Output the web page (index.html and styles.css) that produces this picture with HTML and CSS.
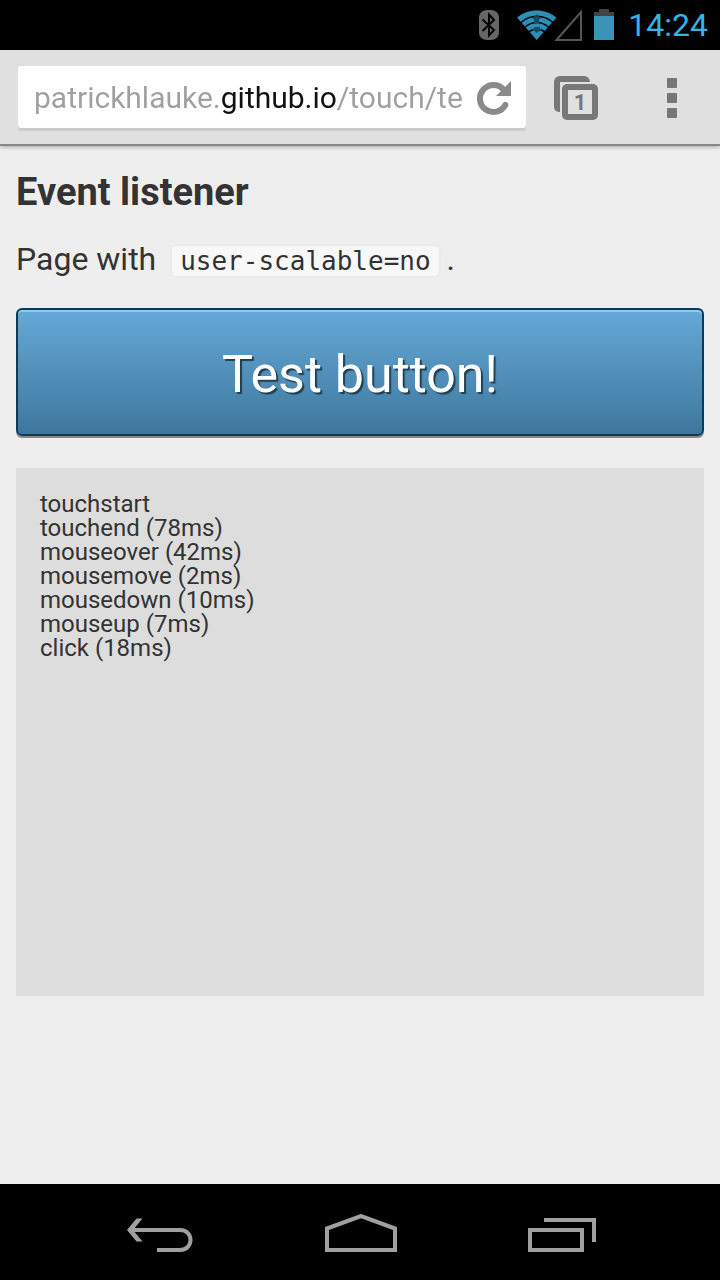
FILE: index.html
```html
<!DOCTYPE html>
<html lang="en">
<head>
<meta charset="utf-8">
<meta name="viewport" content="width=device-width, initial-scale=1">
<title>Event listener</title>
<link rel="stylesheet" href="styles.css">
</head>
<body class="screen">
<div class="status-bar">
  <svg class="status-bluetooth" width="20" height="30" viewBox="0 0 20 30" aria-hidden="true">
    <rect width="20" height="30" rx="8" ry="7" fill="#666"/>
    <path d="M3.500 9.500 15 20l-5 5.500v-21L15 10 3.500 21" fill="none" stroke="#000" stroke-width="2"/>
  </svg>
  <svg class="status-wifi" width="40" height="30" viewBox="0 0 40 30" aria-hidden="true">
    <path d="M0 7.500C11-2 28-2 39.500 7.500L19.700 30Z" fill="#2b8fb8"/>
    <path d="M4 12.500C13 4 27 4 36 12.500M8 17C15 11 24.500 11 31.500 17M12 21.700C16.500 18 23 18 27.500 21.700" fill="none" stroke="#000" stroke-width="1.500"/>
    <path d="m20 4 4 5h-2v4h-5V9h-2ZM17 17h6v2h2l-5 4-5-4h2Z" fill="#154c61"/>
  </svg>
  <svg class="status-signal" width="28" height="32" viewBox="0 0 28 32" aria-hidden="true">
    <path d="M2.500 31 27 3v28Z" fill="none" stroke="#555" stroke-width="2"/>
  </svg>
  <svg class="status-battery" width="20" height="32" viewBox="0 0 20 32" aria-hidden="true">
    <path d="M0 3h5V0h10v3h5v4H0Z" fill="#444"/>
    <path d="M0 7h20v24H0Z" fill="#3994b8"/>
  </svg>
  <time class="clock" datetime="14:24">14:24</time>
</div>

<header class="toolbar">
  <form class="omnibox">
    <input class="omnibox-url" type="text" aria-label="Address" value="patrickhlauke.github.io/touch/te" spellcheck="false">
    <button class="icon-button toolbar-button" type="button" aria-label="Reload">
      <svg width="36" height="36" viewBox="0 0 36 36" aria-hidden="true">
        <path d="M27.500 9.500A13.500 13.500 0 1 0 29.300 25" fill="none" stroke="#8a8a8a" stroke-width="6" stroke-linecap="round"/>
        <path d="M35 1v15H20Z" fill="#8a8a8a"/>
      </svg>
    </button>
  </form>
  <button class="icon-button toolbar-button tabs-button" type="button" aria-label="Open tabs">
    <svg width="44" height="44" viewBox="0 0 44 44" aria-hidden="true">
      <path d="M6 36H5a5 5 0 0 1-5-5V6a6 6 0 0 1 6-6h24a6 6 0 0 1 6 6H6Z" fill="#777"/>
      <rect x="11" y="11" width="30" height="30" rx="2" fill="#e0e0e0" stroke="#777" stroke-width="6"/>
    </svg>
    <span class="tabs-count">1</span>
  </button>
  <button class="icon-button toolbar-button menu-button" type="button" aria-label="Menu">
    <svg width="10" height="40" viewBox="0 0 10 40" fill="#777" aria-hidden="true">
      <rect width="10" height="10" rx="1"/><rect y="15" width="10" height="10" rx="1"/><rect y="30" width="10" height="10" rx="1"/>
    </svg>
  </button>
</header>

<main class="page">
  <h1 class="page-title">Event listener</h1>
  <p class="page-intro">Page with <code class="code">user-scalable=no</code> .</p>
  <button class="test-button" type="button">Test button!</button>
  <div class="event-log" role="log">
    <div>touchstart</div>
    <div>touchend (78ms)</div>
    <div>mouseover (42ms)</div>
    <div>mousemove (2ms)</div>
    <div>mousedown (10ms)</div>
    <div>mouseup (7ms)</div>
    <div>click (18ms)</div>
  </div>
</main>

<nav class="nav-bar" aria-label="System">
  <button class="icon-button" type="button" aria-label="Back">
    <svg width="67" height="35" viewBox="0 0 67 35" fill="none" stroke="#a0a0a0" stroke-width="4" aria-hidden="true">
      <path d="M4 13h50c14 0 14 20 0 20H31"/>
      <path d="M1 13 10.500 1.500h6L7 13l9.500 11.500h-6Z" fill="#a0a0a0" stroke="none"/>
    </svg>
  </button>
  <button class="icon-button" type="button" aria-label="Home">
    <svg width="72" height="38" viewBox="0 0 72 38" fill="none" stroke="#a0a0a0" stroke-width="4" aria-hidden="true">
      <path d="M2 36V14.500L36 2l34 12.500V36Z"/>
    </svg>
  </button>
  <button class="icon-button" type="button" aria-label="Recent apps">
    <svg width="68" height="34" viewBox="0 0 68 34" fill="none" stroke="#a0a0a0" stroke-width="4" aria-hidden="true">
      <path d="M16 2h50v22M2 12h52v20H2Z"/>
    </svg>
  </button>
</nav>
</body>
</html>
```

FILE: styles.css
```css
* {
  box-sizing: border-box;
}

.screen {
  display: flex;
  flex-direction: column;
  min-height: 100vh;
  margin: 0;
  background: #eee;
  color: #333;
  font-family: Roboto, sans-serif;
}

.icon-button {
  display: grid;
  place-items: center;
  flex: none;
  padding: 0;
  border: 0;
  background: none;
}

/* System status bar */
.status-bar {
  display: flex;
  justify-content: flex-end;
  align-items: center;
  height: 50px;
  padding-right: 12px;
  background: #000;
}

.status-bluetooth {
  margin-right: 18px;
}

.status-signal {
  margin: 0 12px 0 -3px;
}

.status-battery {
  margin-right: 14px;
}

.clock {
  color: #33b5e5;
  font-size: 32px;
  line-height: 50px;
}

/* Browser toolbar */
.toolbar {
  display: flex;
  align-items: center;
  height: 96px;
  padding: 0 43px 0 18px;
  border-bottom: 2px solid #888;
  background: #e0e0e0;
  box-shadow: 0 1px 4px rgba(0, 0, 0, 0.3);
}

.toolbar-button {
  padding-top: 2px;
}

.omnibox {
  display: flex;
  align-items: center;
  flex: 1;
  height: 62px;
  min-width: 0;
  padding: 0 14px 0 16px;
  border-radius: 3px;
  background: #fff;
  box-shadow: 0 3px 1px #ccc;
}

.omnibox-url {
  flex: 1;
  min-width: 0;
  height: 48px;
  margin-right: 14px;
  padding: 0;
  border: 0;
  outline: 0;
  background: linear-gradient(90deg, #a0a0a0 187px, #111 187px 304px, #a0a0a0 304px);
  background-clip: text;
  color: transparent;
  font: 30px Roboto, sans-serif;
}

.tabs-button {
  margin-left: 28px;
}

.tabs-button > * {
  grid-area: 1 / 1;
}

.tabs-count {
  padding: 10px 0 0 8px;
  color: #777;
  font: bold 22px/24px Roboto, sans-serif;
}

.menu-button {
  margin-left: 69px;
}

/* Page content */
.page {
  flex: 1;
  padding: 22px 16px 20px;
}

.page-title {
  margin: 0 0 18px;
  font-size: 38px;
  line-height: 48px;
}

.page-intro {
  margin: 0 0 24px;
  font-size: 32px;
  line-height: 50px;
}

.code {
  margin: 0 -2px 0 6px;
  padding: 0 8px;
  border: 2px solid #eaeaea;
  border-radius: 6px;
  background: #f8f8f8;
  font: 26px "DejaVu Sans Mono", monospace;
}

.test-button {
  display: block;
  width: 100%;
  height: 128px;
  margin: 0 0 32px;
  padding: 4px 0 0;
  border: 2px solid #0a3c59;
  border-radius: 6px;
  background: linear-gradient(#65a9d7, #3e779d);
  box-shadow: 0 2px 0 #888, inset 0 2px 0 #96c8ec;
  color: #fff;
  font: 52px Roboto, sans-serif;
  text-shadow: 2px 2px 1px #1e3f53;
}

.event-log {
  min-height: 528px;
  padding: 24px;
  background: #ddd;
  font-size: 24px;
  line-height: 24px;
}

/* System navigation bar */
.nav-bar {
  display: flex;
  justify-content: space-between;
  align-items: flex-end;
  height: 96px;
  padding: 0 124px 28px 126px;
  background: #000;
}
```
